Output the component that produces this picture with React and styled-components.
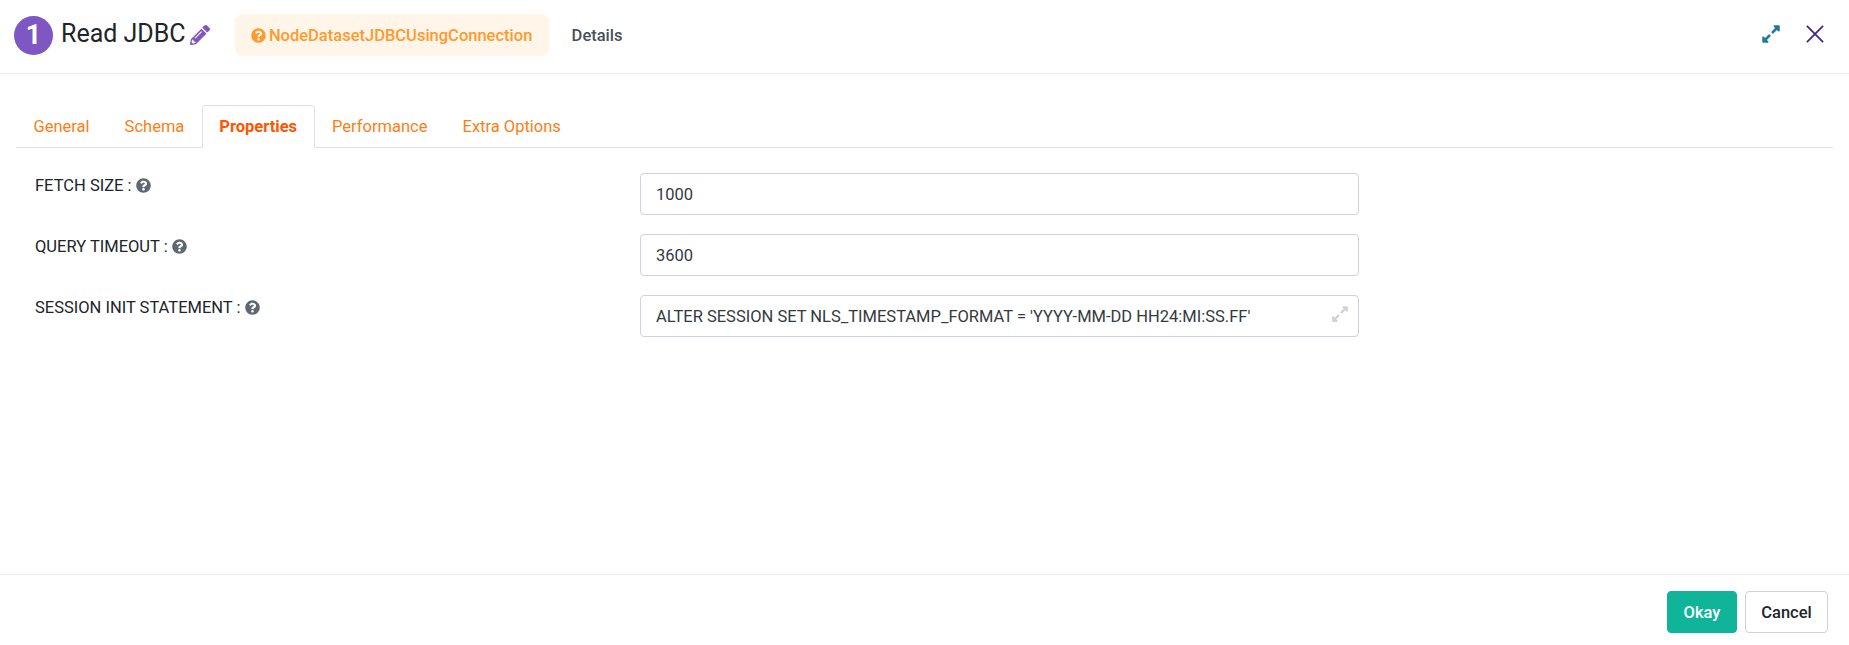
import React from 'react';
import styled, { createGlobalStyle } from 'styled-components';
import { FaExpandAlt, FaPencilAlt, FaQuestionCircle } from 'react-icons/fa';

const GlobalStyle = createGlobalStyle`
  html, body { margin: 0; padding: 0; background: #fff; }
  body { font-family: Roboto, "Liberation Sans", sans-serif; color: #212529; }
  * { box-sizing: border-box; }
`;

const Modal = styled.div`
  width: 100%;
  height: 645px;
  display: flex;
  flex-direction: column;
  overflow: hidden;
`;

const Header = styled.header`
  height: 74px;
  flex: none;
  display: flex;
  align-items: center;
  padding: 0 25px 3px 14px;
  border-bottom: 1px solid #e9ecef;
`;

const StepBadge = styled.span`
  width: 39px;
  height: 39px;
  border-radius: 50%;
  background: #7e57c2;
  color: #fff;
  font-size: 27px;
  font-weight: 700;
  display: flex;
  align-items: center;
  justify-content: center;
  margin-right: 8px;
`;

const Title = styled.h5`
  margin: 0 4px 3px 0;
  font-size: 25px;
  font-weight: 400;
  line-height: 30px;
  color: #212529;
`;

const EditIcon = styled(FaPencilAlt)`
  width: 20px;
  height: 20px;
  color: #7e57c2;
  margin-right: 25px;
`;

const NodeChip = styled.div`
  width: 314px;
  height: 42px;
  border-radius: 8px;
  background: #fff5e8;
  color: #ff9a2e;
  font-size: 16.5px;
  font-weight: 500;
  display: flex;
  align-items: center;
  justify-content: center;
  gap: 3px;
  margin-right: 23px;
  svg { width: 15px; height: 15px; }
`;

const DetailsLink = styled.span`
  font-size: 16.5px;
  font-weight: 500;
  color: #495057;
`;

const HeaderActions = styled.div`
  margin-left: auto;
  margin-bottom: 2px;
  display: flex;
  align-items: center;
  gap: 25px;
`;

const ExpandIcon = styled(FaExpandAlt)`
  width: 20px;
  height: 20px;
  color: #1f7a9c;
`;

const CloseIcon = styled.svg`
  width: 18px;
  height: 18px;
  stroke: #3f2b86;
  stroke-width: 2;
  fill: none;
  display: block;
`;

const Body = styled.main`
  flex: 1;
  padding: 31px 16px 0;
`;

const Tabs = styled.nav`
  display: flex;
  height: 43px;
  padding-left: 0;
  border-bottom: 1px solid #dee2e6;
`;

const Tab = styled.a`
  height: 43px;
  padding: 0 16.5px;
  font-size: 16.5px;
  font-weight: ${p => (p.$active ? 700 : 400)};
  color: ${p => (p.$active ? '#ff5500' : '#fd7e14')};
  display: flex;
  align-items: center;
  border: 1px solid ${p => (p.$active ? '#dee2e6' : 'transparent')};
  border-bottom-color: ${p => (p.$active ? '#fff' : 'transparent')};
  border-radius: 4px 4px 0 0;
`;

const Form = styled.div`
  padding: 25px 0 0 19px;
  display: flex;
  flex-direction: column;
  gap: 19px;
`;

const Row = styled.div`
  display: grid;
  grid-template-columns: 605px 719px;
  height: 42px;
`;

const Label = styled.label`
  font-size: 16.5px;
  font-weight: 400;
  line-height: 26px;
  color: #212529;
  display: flex;
  align-items: flex-start;
  gap: 4px;
  svg { width: 15px; height: 15px; color: #5f6770; margin-top: 5px; }
`;

const InputBox = styled.div`
  position: relative;
  height: 42px;
  padding: 0 15px;
  border: 1px solid #ced4da;
  border-radius: 4px;
  font-size: 16.5px;
  display: flex;
  align-items: center;
  color: #343a40;
`;

const FieldExpand = styled(FaExpandAlt)`
  position: absolute;
  right: 9px;
  top: 9px;
  width: 18px;
  height: 18px;
  color: #d0d3d6;
`;

const Footer = styled.footer`
  height: 71px;
  flex: none;
  border-top: 1px solid #e9ecef;
  display: flex;
  justify-content: flex-end;
  align-items: flex-start;
  gap: 8px;
  padding: 16px 21px 0 0;
`;

const Button = styled.button`
  height: 42px;
  width: ${p => (p.$primary ? '70px' : '83px')};
  border-radius: 4px;
  border: 1px solid ${p => (p.$primary ? '#10b498' : '#ced4da')};
  background: ${p => (p.$primary ? '#10b498' : '#fff')};
  color: ${p => (p.$primary ? '#fff' : '#212529')};
  font-family: inherit;
  font-size: 16.5px;
  font-weight: 500;
  padding: 0;
`;

const fields = [
  { label: 'FETCH SIZE :', value: '1000' },
  { label: 'QUERY TIMEOUT :', value: '3600' },
  { label: 'SESSION INIT STATEMENT :', value: "ALTER SESSION SET NLS_TIMESTAMP_FORMAT = 'YYYY-MM-DD HH24:MI:SS.FF'", expand: true },
];

const tabs = ['General', 'Schema', 'Properties', 'Performance', 'Extra Options'];

export default function App() {
  return (
    <Modal>
      <GlobalStyle />
      <Header>
        <StepBadge>1</StepBadge>
        <Title>Read JDBC</Title>
        <EditIcon />
        <NodeChip>
          <FaQuestionCircle />
          NodeDatasetJDBCUsingConnection
        </NodeChip>
        <DetailsLink>Details</DetailsLink>
        <HeaderActions>
          <ExpandIcon />
          <CloseIcon viewBox="0 0 20 20">
            <path d="M1 1 L19 19 M19 1 L1 19" />
          </CloseIcon>
        </HeaderActions>
      </Header>
      <Body>
        <Tabs>
          {tabs.map(t => (
            <Tab key={t} $active={t === 'Properties'}>{t}</Tab>
          ))}
        </Tabs>
        <Form>
          {fields.map(f => (
            <Row key={f.label}>
              <Label>
                {f.label}
                <FaQuestionCircle />
              </Label>
              <InputBox>
                {f.value}
                {f.expand && <FieldExpand />}
              </InputBox>
            </Row>
          ))}
        </Form>
      </Body>
      <Footer>
        <Button $primary>Okay</Button>
        <Button>Cancel</Button>
      </Footer>
    </Modal>
  );
}
